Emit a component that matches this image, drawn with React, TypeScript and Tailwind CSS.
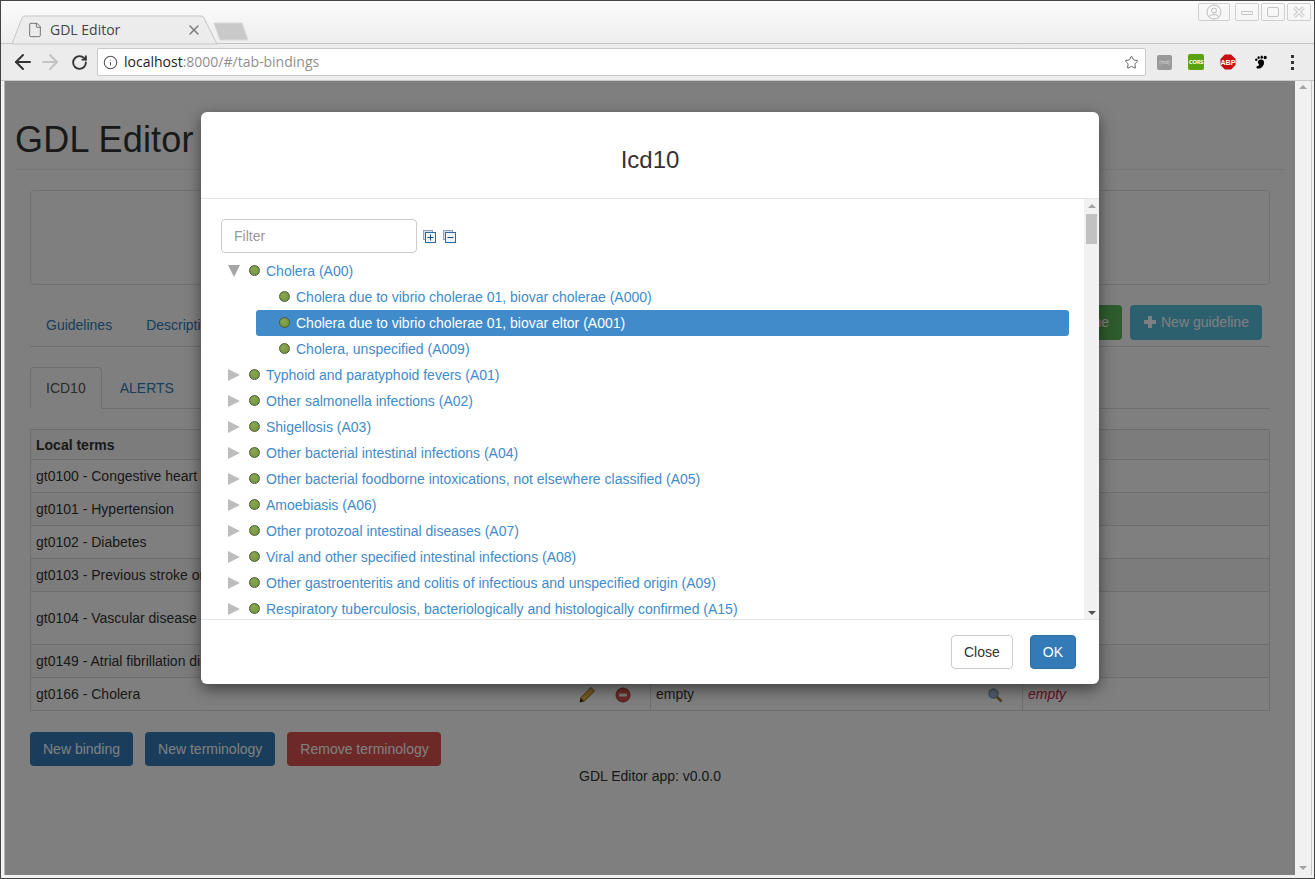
import React from 'react';
import { ArrowLeft, ArrowRight, File, Info, RotateCw, Star, X } from 'lucide-react';

const chapters = [
  'Typhoid and paratyphoid fevers (A01)',
  'Other salmonella infections (A02)',
  'Shigellosis (A03)',
  'Other bacterial intestinal infections (A04)',
  'Other bacterial foodborne intoxications, not elsewhere classified (A05)',
  'Amoebiasis (A06)',
  'Other protozoal intestinal diseases (A07)',
  'Viral and other specified intestinal infections (A08)',
  'Other gastroenteritis and colitis of infectious and unspecified origin (A09)',
  'Respiratory tuberculosis, bacteriologically and histologically confirmed (A15)',
];

const rows = [
  { label: 'gt0100 - Congestive heart failure', h: 'h-[33px]', alt: false },
  { label: 'gt0101 - Hypertension', h: 'h-[33px]', alt: true },
  { label: 'gt0102 - Diabetes', h: 'h-[33px]', alt: false },
  { label: 'gt0103 - Previous stroke or TIA', h: 'h-[33px]', alt: true },
  { label: 'gt0104 - Vascular disease', h: 'h-[53px]', alt: false },
  { label: 'gt0149 - Atrial fibrillation diagnosis', h: 'h-[33px]', alt: true },
];

function Dot() {
  return <span className="w-[11px] h-[11px] mb-[1px] shrink-0 rounded-full border border-[#4a5a35] bg-[radial-gradient(circle_at_40%_35%,#8aa84f,#6f8f3e)]" />;
}

function Arrow({ open }: { open?: boolean }) {
  return (
    <svg width="14" height="14" viewBox="0 0 14 14" className="shrink-0 mr-[8px]">
      {open ? <path d="M1 1h12l-6 12z" fill="#a6a6a6" /> : <path d="M1 1l12 6-12 6z" fill="#bdbdbd" />}
    </svg>
  );
}

function RootNode({ label, open }: { label: string; open?: boolean }) {
  return (
    <div className="h-[26px] flex items-center pl-[6px] text-[#428bca] whitespace-nowrap">
      <Arrow open={open} />
      <Dot />
      <span className="ml-[6px]">{label}</span>
    </div>
  );
}

function ChildNode({ label, selected }: { label: string; selected?: boolean }) {
  return (
    <div className={selected
      ? 'ml-[35px] w-[813px] h-[26px] flex items-center pl-[23px] gap-[6px] rounded-[3px] bg-[#428bca] text-white'
      : 'ml-[35px] w-[813px] h-[26px] flex items-center pl-[23px] gap-[6px] text-[#428bca]'}>
      <Dot />
      <span>{label}</span>
    </div>
  );
}

function TreeToggle({ minus }: { minus?: boolean }) {
  return (
    <svg width="13" height="13" viewBox="0 0 13 13">
      <rect x="0.5" y="0.5" width="9" height="9" fill="#d5dfe9" stroke="#8ea3b8" />
      <rect x="2.5" y="2.5" width="10" height="10" fill="#eef3f8" stroke="#2f6a9e" />
      <path d={minus ? 'M4.5 7.500h6' : 'M4.500 7.500h6M7.500 4.500v6'} stroke="#1d4a78" strokeWidth="1" />
    </svg>
  );
}

function WindowButton({ children, wide }: { children: React.ReactNode; wide?: boolean }) {
  return (
    <div className={wide
      ? 'w-[32px] h-[18px] flex items-center justify-center border border-[#cfcfcf] rounded-[2px]'
      : 'w-[24px] h-[18px] flex items-center justify-center border border-[#cfcfcf] rounded-[2px]'}>
      {children}
    </div>
  );
}

function Extensions() {
  return (
    <div className="flex items-center">
      <div className="w-[15px] h-[15px] rounded-[2px] bg-[#999999] flex items-center justify-center text-[5px] leading-none text-[#dddddd]">(md)</div>
      <div className="ml-[16px] w-[16px] h-[16px] rounded-[2px] bg-[#5aa20e] flex items-center justify-center text-[6px] font-bold leading-none tracking-[-0.3px] text-white">CORS</div>
      <svg width="16" height="16" viewBox="0 0 18 18" className="ml-[16px]">
        <path d="M5.500 0.500h7L17.500 5.500v7L12.500 17.500h-7L0.500 12.500v-7z" fill="#c70d0d" />
        <text x="9" y="12" textAnchor="middle" fontSize="8" fontWeight="700" fill="#fff" fontFamily="Liberation Sans">ABP</text>
      </svg>
      <svg width="15" height="15" viewBox="0 0 16 16" className="ml-[17px]">
        <path d="M7.500 5c3-.6 4.700 1.200 4.200 4-.5 3-3.200 5.500-6 5.500-1.700 0-2.400-1-2-2 .4-1 2.300-.6 2.800-1.800.4-1-1.400-1.500-1.300-3 .1-1.500 1-2.400 2.300-2.700z" fill="#000" />
        <circle cx="3.500" cy="5" r="1.300" fill="#000" />
        <ellipse cx="6" cy="2.800" rx="1.200" ry="1.500" fill="#000" />
        <ellipse cx="9.300" cy="2.300" rx="1.300" ry="1.700" fill="#000" />
        <ellipse cx="13" cy="2.600" rx="1.700" ry="1.800" fill="#000" />
      </svg>
      <div className="ml-[23px] flex flex-col gap-[3px]">
        <span className="w-[3px] h-[3px] bg-[#333]" />
        <span className="w-[3px] h-[3px] bg-[#333]" />
        <span className="w-[3px] h-[3px] bg-[#333]" />
      </div>
    </div>
  );
}

function BrowserChrome() {
  return (
    <div className="font-['Open_Sans',sans-serif]">
      {/* title strip with the tab */}
      <div className="relative h-[43px] bg-gradient-to-b from-[#fbfbfb] to-[#eeeeee] border-b border-[#c4c4c4]">
        <div className="absolute left-[9px] top-[14px] w-[240px] h-[30px]">
          <svg width="240" height="30" viewBox="0 0 240 30" className="absolute left-0 top-0">
            <path d="M2 29L12 3Q13 1 15 1H191Q193 1 194 3L207 29z" fill="#ececec" stroke="#c6c6c6" />
            <path d="M204 8H232L238 25H210z" fill="#c9c9c9" stroke="#d9d9d9" />
          </svg>
          <div className="absolute left-[17px] top-[4px] w-[175px] h-[22px] flex items-center text-[#444] text-[14px]">
            <File size={16} strokeWidth={1.200} className="text-[#555]" />
            <span className="ml-[7px]">GDL Editor</span>
            <X size={16} strokeWidth={2} className="ml-auto text-[#777]" />
          </div>
        </div>
        <div className="absolute right-[3px] top-[2px] flex gap-[2px]">
          <div className="mr-[3px]">
            <WindowButton wide>
              <svg width="16" height="16" viewBox="0 0 16 16" fill="none" stroke="#bbb">
                <circle cx="8" cy="8" r="7" />
                <circle cx="8" cy="6.500" r="2.500" />
                <path d="M3.500 12.500c1-2.500 8-2.500 9 0" />
              </svg>
            </WindowButton>
          </div>
          <WindowButton><span className="w-[12px] h-[4px] border border-[#c4c4c4] rounded-[1px] mt-[1px]" /></WindowButton>
          <WindowButton><span className="w-[12px] h-[10px] border border-[#c4c4c4] rounded-[2px]" /></WindowButton>
          <WindowButton>
            <svg width="14" height="14" viewBox="0 0 14 14">
              <path d="M2.500 2.500l9 9M11.500 2.500l-9 9" stroke="#c8c8c8" strokeWidth="3.500" />
              <path d="M2.500 2.500l9 9M11.500 2.500l-9 9" stroke="#f6f6f6" strokeWidth="1.500" />
            </svg>
          </WindowButton>
        </div>
      </div>
      {/* toolbar */}
      <div className="h-[37px] bg-[#ececec] border-b border-[#c8c8c8] flex items-center pl-[10px] pr-[15px]">
        <ArrowLeft size={24} strokeWidth={2} className="text-[#333]" />
        <ArrowRight size={24} strokeWidth={2} className="ml-[3px] text-[#c4c4c4]" />
        <RotateCw size={17} strokeWidth={2.600} className="ml-[9px] text-[#333]" />
        <div className="ml-[9px] w-[1049px] h-[28px] bg-white border border-[#c9c9c9] rounded-[2px] flex items-center pl-[5px] pr-[6px]">
          <Info size={15} strokeWidth={1.700} className="text-[#555]" />
          <span className="ml-[6px] text-[14px] text-[#222]">localhost<span className="text-[#8f8f8f]">:8000/#/tab-bindings</span></span>
          <Star size={15} strokeWidth={1.600} className="ml-auto text-[#666]" />
        </div>
        <div className="ml-[11px]"><Extensions /></div>
      </div>
    </div>
  );
}

function Background() {
  return (
    <div className="h-full bg-white px-[10px] text-[#333]">
      <h1 className="pt-[39px] pb-[9px] text-[36px] leading-[40px] tracking-[0.2px] border-b border-[#eeeeee]">GDL Editor</h1>
      <div className="mx-[15px] mt-[20px]">
        <div className="h-[95px] rounded-[4px] border border-[#e3e3e3] bg-white" />
        <div className="mt-[20px] h-[42px] border-b border-[#dddddd] flex items-start justify-between">
          <div className="flex gap-[2px] text-[#337ab7]">
            <span className="px-[16px] py-[10px]">Guidelines</span>
            <span className="px-[16px] py-[10px]">Description</span>
          </div>
          <div className="flex gap-[8px] mr-[8px] text-white">
            <span className="h-[35px] pb-[1px] px-[13px] flex items-center rounded-[4px] bg-[#5cb85c]">Save guideline</span>
            <span className="h-[35px] pb-[1px] w-[132px] px-[13px] flex items-center gap-[4px] rounded-[4px] bg-[#5bc0de]">
              <svg width="14" height="14" viewBox="0 0 14 14"><path d="M5 1h4v4h4v4H9v4H5V9H1V5h4z" fill="#fff" /></svg>
              New guideline
            </span>
          </div>
        </div>
        <div className="mt-[20px] h-[42px] border-b border-[#dddddd] flex text-[#337ab7]">
          <span className="h-[42px] px-[15px] flex items-center bg-white border border-[#dddddd] border-b-white rounded-t-[4px] text-[#555]">ICD10</span>
          <span className="h-[42px] px-[18px] flex items-center">ALERTS</span>
        </div>
        <table className="mt-[20px] w-[1239px] table-fixed border-collapse border border-[#dddddd]">
          <colgroup>
            <col className="w-[620px]" />
            <col className="w-[372px]" />
            <col className="w-[247px]" />
          </colgroup>
          <tbody>
            <tr className="h-[30px] bg-[#f9f9f9] border-b border-[#dddddd]">
              <th className="px-[5px] text-left font-bold">Local terms</th>
              <th />
              <th />
            </tr>
            {rows.map(r => (
              <tr key={r.label} className={r.alt ? r.h + ' bg-[#f9f9f9] border-b border-[#dddddd]' : r.h + ' border-b border-[#dddddd]'}>
                <td className="px-[5px]">{r.label}</td>
                <td />
                <td />
              </tr>
            ))}
            <tr className="h-[33px]">
              <td className="px-[5px]">
                <div className="flex items-center">
                  <span>gt0166 - Cholera</span>
                  <svg width="18" height="18" viewBox="0 0 18 18" className="ml-auto mr-[19px] mt-[2px]">
                    <path d="M13 1.500l3.500 3.500L6 15.500 2.500 12z" fill="#eeb33c" stroke="#8a6414" />
                    <path d="M2.500 12L1.500 16.500 6 15.500z" fill="#3a2a10" />
                  </svg>
                  <svg width="16" height="16" viewBox="0 0 16 16" className="mr-[14px] mt-[2px]">
                    <circle cx="8" cy="8" r="7" fill="#d9534f" stroke="#a33a36" />
                    <rect x="4" y="6.500" width="8" height="3" rx="1" fill="#f4f4f4" />
                  </svg>
                </div>
              </td>
              <td className="px-[5px] border-l border-[#dddddd]">
                <div className="flex items-center">
                  <span>empty</span>
                  <svg width="16" height="16" viewBox="0 0 16 16" className="ml-auto mr-[14px] mt-[2px]">
                    <circle cx="6.500" cy="6.500" r="4.500" fill="#a5bcd2" stroke="#7f98ad" strokeWidth="1.500" />
                    <path d="M10 10l4.500 4.500" stroke="#a8792c" strokeWidth="2.500" />
                  </svg>
                </div>
              </td>
              <td className="px-[5px] border-l border-[#dddddd] italic text-[#c7254e]">empty</td>
            </tr>
          </tbody>
        </table>
        <div className="mt-[21px] flex gap-[12px] text-white">
          <span className="h-[34px] px-[13px] flex items-center rounded-[4px] bg-[#337ab7]">New binding</span>
          <span className="h-[34px] px-[13px] flex items-center rounded-[4px] bg-[#337ab7]">New terminology</span>
          <span className="h-[34px] pl-[13px] pr-[12px] flex items-center rounded-[4px] bg-[#d9534f]">Remove terminology</span>
        </div>
        <p className="text-center">GDL Editor app: v0.0.0</p>
      </div>
    </div>
  );
}

function Modal() {
  return (
    <div className="absolute inset-0 bg-black/50 flex justify-center items-start pt-[31px]">
      <div className="w-[898px] h-[572px] flex flex-col bg-white rounded-[6px] shadow-[0_5px_15px_rgba(0,0,0,0.5)] overflow-hidden text-[#333]">
        <div className="h-[87px] shrink-0 flex items-center justify-center pt-[10px] border-b border-[#e5e5e5] text-[24px] leading-[26px]">Icd10</div>
        <div className="flex-1 min-h-0 flex">
          <div className="flex-1 min-w-0 pl-[20px] pt-[20px] overflow-hidden">
            <div className="flex items-center">
              <input placeholder="Filter" className="w-[196px] h-[34px] px-[12px] rounded-[4px] border border-[#cccccc] placeholder:text-[#999999] bg-white" />
              <span className="ml-[6px] flex gap-[7px]">
                <TreeToggle />
                <TreeToggle minus />
              </span>
            </div>
            <div className="mt-[5px]">
              <RootNode label="Cholera (A00)" open />
              <ChildNode label="Cholera due to vibrio cholerae 01, biovar cholerae (A000)" />
              <ChildNode label="Cholera due to vibrio cholerae 01, biovar eltor (A001)" selected />
              <ChildNode label="Cholera, unspecified (A009)" />
              {chapters.map(c => <RootNode key={c} label={c} />)}
            </div>
          </div>
          <div className="w-[15px] shrink-0 bg-[#f1f1f1] flex flex-col items-center pt-[5px] pb-[4px] px-[2px]">
            <span className="w-0 h-0 border-x-[4px] border-x-transparent border-b-[4px] border-b-[#a3a3a3]" />
            <span className="mt-[6px] w-full h-[30px] bg-[#c1c1c1]" />
            <span className="mt-auto w-0 h-0 border-x-[4px] border-x-transparent border-t-[4px] border-t-[#505050]" />
          </div>
        </div>
        <div className="h-[65px] shrink-0 border-t border-[#e5e5e5] flex items-start justify-end gap-[17px] pt-[15px] pr-[23px]">
          <button className="h-[34px] px-[12px] rounded-[4px] border border-[#cccccc] bg-white text-[#333]">Close</button>
          <button className="h-[34px] px-[12px] rounded-[4px] border border-[#2e6da4] bg-[#337ab7] text-white">OK</button>
        </div>
      </div>
    </div>
  );
}

export default function App() {
  return (
    <div className="w-[1315px] h-[879px] flex flex-col overflow-hidden bg-[#f2f2f2] border border-[#444444] font-['Liberation_Sans',sans-serif] text-[14px] leading-[20px]">
      <BrowserChrome />
      <div className="h-[794px] shrink-0 flex">
        <div className="w-[4px] shrink-0 border-r border-[#b5b5b5]" />
        <div className="relative w-[1290px] shrink-0">
          <Background />
          <Modal />
        </div>
        <div className="w-[16px] shrink-0 bg-[#f1f1f1] flex flex-col items-center justify-between pt-[4px] pb-[5px]">
          <span className="w-0 h-0 border-x-[4px] border-x-transparent border-b-[4px] border-b-[#a3a3a3]" />
          <span className="w-0 h-0 border-x-[4px] border-x-transparent border-t-[4px] border-t-[#a3a3a3]" />
        </div>
        <div className="flex-1 border-l border-[#c8c8c8]" />
      </div>
    </div>
  );
}
